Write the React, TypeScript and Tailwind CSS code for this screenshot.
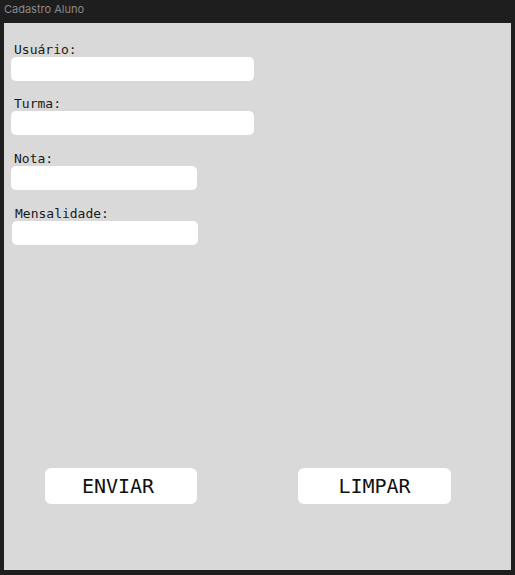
const MONO = "font-['DejaVu_Sans_Mono',monospace]"

interface FieldProps {
  label: string
  width: string
  shift?: boolean
  className?: string
}

function Field({ label, width, shift, className }: FieldProps) {
  return (
    <div className={`flex flex-col ${shift ? 'pl-px' : ''} ${className ?? ''}`}>
      <label className={`${MONO} h-[15px] pl-[3px] text-[13px] leading-[16px] text-[#1a1a1a]`}>{label}</label>
      <input
        type="text"
        className={`${width} h-[24px] rounded-[5px] bg-white px-2 text-[13px] outline-none`}
      />
    </div>
  )
}

export default function App() {
  return (
    <div className="flex h-[575px] w-[515px] flex-col bg-[#1e1e1e]">
      {/* Title bar */}
      <div className="flex h-[23px] items-start pl-1 pt-[3px]">
        <span className="font-['Inter',sans-serif] text-[11px] leading-[13px] text-[#8a8a8a]">Cadastro Aluno</span>
      </div>

      {/* Form panel */}
      <div className="mx-1 flex h-[547px] flex-col bg-[#d9d9d9] pl-[7px] pt-[19px]">
        <Field label="Usuário:" width="w-[243px]" />
        <Field label="Turma:" width="w-[243px]" className="mt-[15px]" />
        <Field label="Nota:" width="w-[186px]" className="mt-[16px]" />
        <Field label="Mensalidade:" width="w-[186px]" shift className="mt-[16px]" />

        <div className="flex-1" />

        <div className="flex gap-[101px] pb-[66px] pl-[34px]">
          <button className={`${MONO} h-[36px] w-[152px] rounded-[6px] bg-white pr-[6px] text-[20px] text-[#111]`}>
            ENVIAR
          </button>
          <button className={`${MONO} h-[36px] w-[153px] rounded-[6px] bg-white text-[20px] text-[#111]`}>
            LIMPAR
          </button>
        </div>
      </div>
    </div>
  )
}
